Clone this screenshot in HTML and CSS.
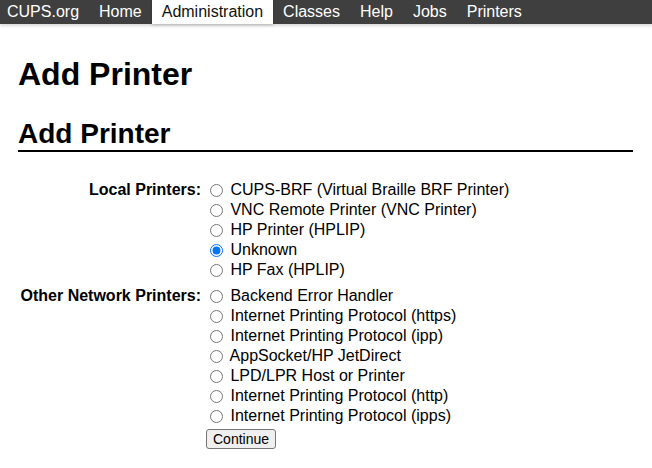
FILE: index.html
```html
<!DOCTYPE html>
<html lang="en">
<head>
    <meta charset="UTF-8">
    <meta name="viewport" content="width=device-width, initial-scale=1.0">
    <title>Add Printer - CUPS</title>
    <link rel="stylesheet" href="styles.css">
</head>
<body>
<nav class="header">
    <a class="first" href="#">CUPS.org</a>
    <a href="#">Home</a>
    <a class="active" href="#">Administration</a>
    <a href="#">Classes</a>
    <a href="#">Help</a>
    <a href="#">Jobs</a>
    <a href="#">Printers</a>
</nav>
<div class="body">
    <h1>Add Printer</h1>
    <h2 class="title">Add Printer</h2>
    <form class="printer-form">
        <div class="label">Local Printers:</div>
        <div class="options">
            <label class="option"><input type="radio" name="device"> CUPS-BRF (Virtual Braille BRF Printer)</label>
            <label class="option"><input type="radio" name="device"> VNC Remote Printer (VNC Printer)</label>
            <label class="option"><input type="radio" name="device"> HP Printer (HPLIP)</label>
            <label class="option"><input type="radio" name="device" checked> Unknown</label>
            <label class="option"><input type="radio" name="device"> HP Fax (HPLIP)</label>
        </div>
        <div class="label">Other Network Printers:</div>
        <div class="options">
            <label class="option"><input type="radio" name="device"> Backend Error Handler</label>
            <label class="option"><input type="radio" name="device"> Internet Printing Protocol (https)</label>
            <label class="option"><input type="radio" name="device"> Internet Printing Protocol (ipp)</label>
            <label class="option"><input type="radio" name="device"> AppSocket/HP JetDirect</label>
            <label class="option"><input type="radio" name="device"> LPD/LPR Host or Printer</label>
            <label class="option"><input type="radio" name="device"> Internet Printing Protocol (http)</label>
            <label class="option"><input type="radio" name="device"> Internet Printing Protocol (ipps)</label>
        </div>
        <div></div>
        <div class="actions">
            <button type="button">Continue</button>
        </div>
    </form>
</div>
</body>
</html>
```
FILE: styles.css
```css
body {
    margin: 0;
    font-family: "Liberation Sans", Arial, sans-serif;
    font-size: 16px;
    color: #000;
    background-color: #fff;
}
.header {
    display: flex;
    height: 24px;
    background-color: #3f3f3f;
    box-shadow: 0 2px 3px rgba(0, 0, 0, 0.15);
}
.header a {
    padding: 0 10px;
    line-height: 24px;
    color: #fff;
    text-decoration: none;
}
.header a.first {
    padding-left: 7px;
}
.header a.active {
    background-color: #fff;
    color: #111;
    box-shadow: 0 1px 3px rgba(0, 0, 0, 0.2);
}
.body {
    padding: 0 19px 0 18px;
}
h1 {
    font-size: 32px;
    margin: 32px 0 0;
}
h2.title {
    font-size: 28px;
    margin: 25px 0 0;
    padding-bottom: 0;
    border-bottom: 2px solid #000;
}
.printer-form {
    display: grid;
    grid-template-columns: 183px 1fr;
    row-gap: 6px;
    margin-top: 28px;
}
.label {
    font-weight: bold;
    text-align: right;
    line-height: 20px;
}
.option {
    display: flex;
    align-items: center;
    height: 20px;
    white-space: pre;
}
.option input {
    width: 13px;
    height: 13px;
    margin: 1px 3px 0 9px;
}
.actions {
    margin-top: -3px;
}
.actions button {
    margin-left: 5px;
    font-family: "Liberation Sans", Arial, sans-serif;
    font-size: 14px;
    padding: 1px 6px;
    border: 1px solid #767676;
    border-radius: 3px;
    background-color: #efefef;
    color: #000;
}
```
